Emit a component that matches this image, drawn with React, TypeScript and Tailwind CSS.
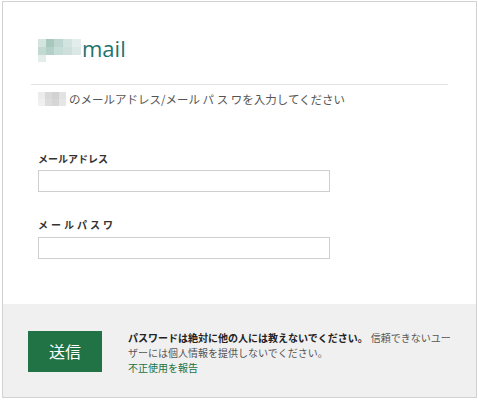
import React from "react";

const jp = { fontFamily: '"Noto Sans CJK JP", "Noto Sans", sans-serif' };

export default function App() {
  return (
    <div className="w-[478px] h-[400px] bg-white pt-[1px] pl-[2px]" style={jp}>
      <div className="w-[475px] h-[397px] border border-[#d2d2d2] flex flex-col">
        <div className="flex-1 px-[28px]">
          <div className="pl-[7px] pt-[37px] flex items-start">
            <div className="flex flex-col">
              <div className="flex">
                <div className="w-[8px] h-[8px] bg-[#d4e4df]" />
                <div className="w-[8px] h-[8px] bg-[#a9c8bd]" />
                <div className="w-[9px] h-[8px] bg-[#bdd6cf]" />
                <div className="w-[9px] h-[8px] bg-[#d3e3df]" />
                <div className="w-[9px] h-[8px] bg-[#e3edeb]" />
              </div>
              <div className="flex">
                <div className="w-[8px] h-[8px] bg-[#c3dad2]" />
                <div className="w-[8px] h-[8px] bg-[#b3d0c6]" />
                <div className="w-[9px] h-[8px] bg-[#c6dcd6]" />
                <div className="w-[9px] h-[8px] bg-[#cfe0dc]" />
                <div className="w-[9px] h-[8px] bg-[#dbe8e5]" />
              </div>
              <div className="flex">
                <div className="w-[8px] h-[7px] bg-[#e3eeeb]" />
              </div>
            </div>
            <span
              className="text-[22px] leading-[22px] text-[#1d7470] ml-[1px] -mt-[2px]"
              style={{ fontFamily: '"Open Sans", "Noto Sans", sans-serif' }}
            >
              mail
            </span>
          </div>
          <div className="mt-[22px] h-[1px] bg-[#e4e4e4]" />
          <div className="pl-[7px] mt-[6px] flex items-center h-[16px]">
            <div className="flex flex-col">
              <div className="flex">
                <div className="w-[7px] h-[7px] bg-[#ececec]" />
                <div className="w-[7px] h-[7px] bg-[#d9d9d9]" />
                <div className="w-[7px] h-[7px] bg-[#d2d2d2]" />
                <div className="w-[7px] h-[7px] bg-[#e2e2e2]" />
              </div>
              <div className="flex">
                <div className="w-[7px] h-[7px] bg-[#f0f0f0]" />
                <div className="w-[7px] h-[7px] bg-[#dcdcdc]" />
                <div className="w-[7px] h-[7px] bg-[#d6d6d6]" />
                <div className="w-[7px] h-[7px] bg-[#e6e6e6]" />
              </div>
            </div>
            <span className="ml-[3px] text-[11.5px] leading-[16px] text-[#555]">
              のメールアドレス/メール パ ス ワを入力してください
            </span>
          </div>
          <div className="pl-[7px] mt-[45px]">
            <div className="text-[10px] leading-[14px] font-bold text-[#333]">メールアドレス</div>
            <div className="mt-[4px] w-[292px] h-[22px] border border-[#cfcfcf] bg-white" />
            <div className="mt-[26px] text-[10px] leading-[14px] font-bold text-[#333] tracking-[3px]">
              メールパスワ
            </div>
            <div className="mt-[5px] w-[292px] h-[22px] border border-[#cfcfcf] bg-white" />
          </div>
        </div>
        <div className="h-[93px] bg-[#f0f0f0] flex items-start pl-[25px] pt-[27px]">
          <button className="w-[74px] h-[41px] bg-[#217346] text-white text-[16px] leading-[41px] shrink-0">
            送信
          </button>
          <div className="ml-[26px] -mt-[1px] text-[10px] leading-[15px] text-[#555]">
            <span className="font-bold text-[#222]">パスワードは絶対に他の人には教えないでください。</span>
            <span className="ml-[3px]">信頼できないユー</span>
            <br />
            <span>ザーには個人情報を提供しないでください。</span>
            <br />
            <a className="text-[#217346]">不正使用を報告</a>
          </div>
        </div>
      </div>
    </div>
  );
}
